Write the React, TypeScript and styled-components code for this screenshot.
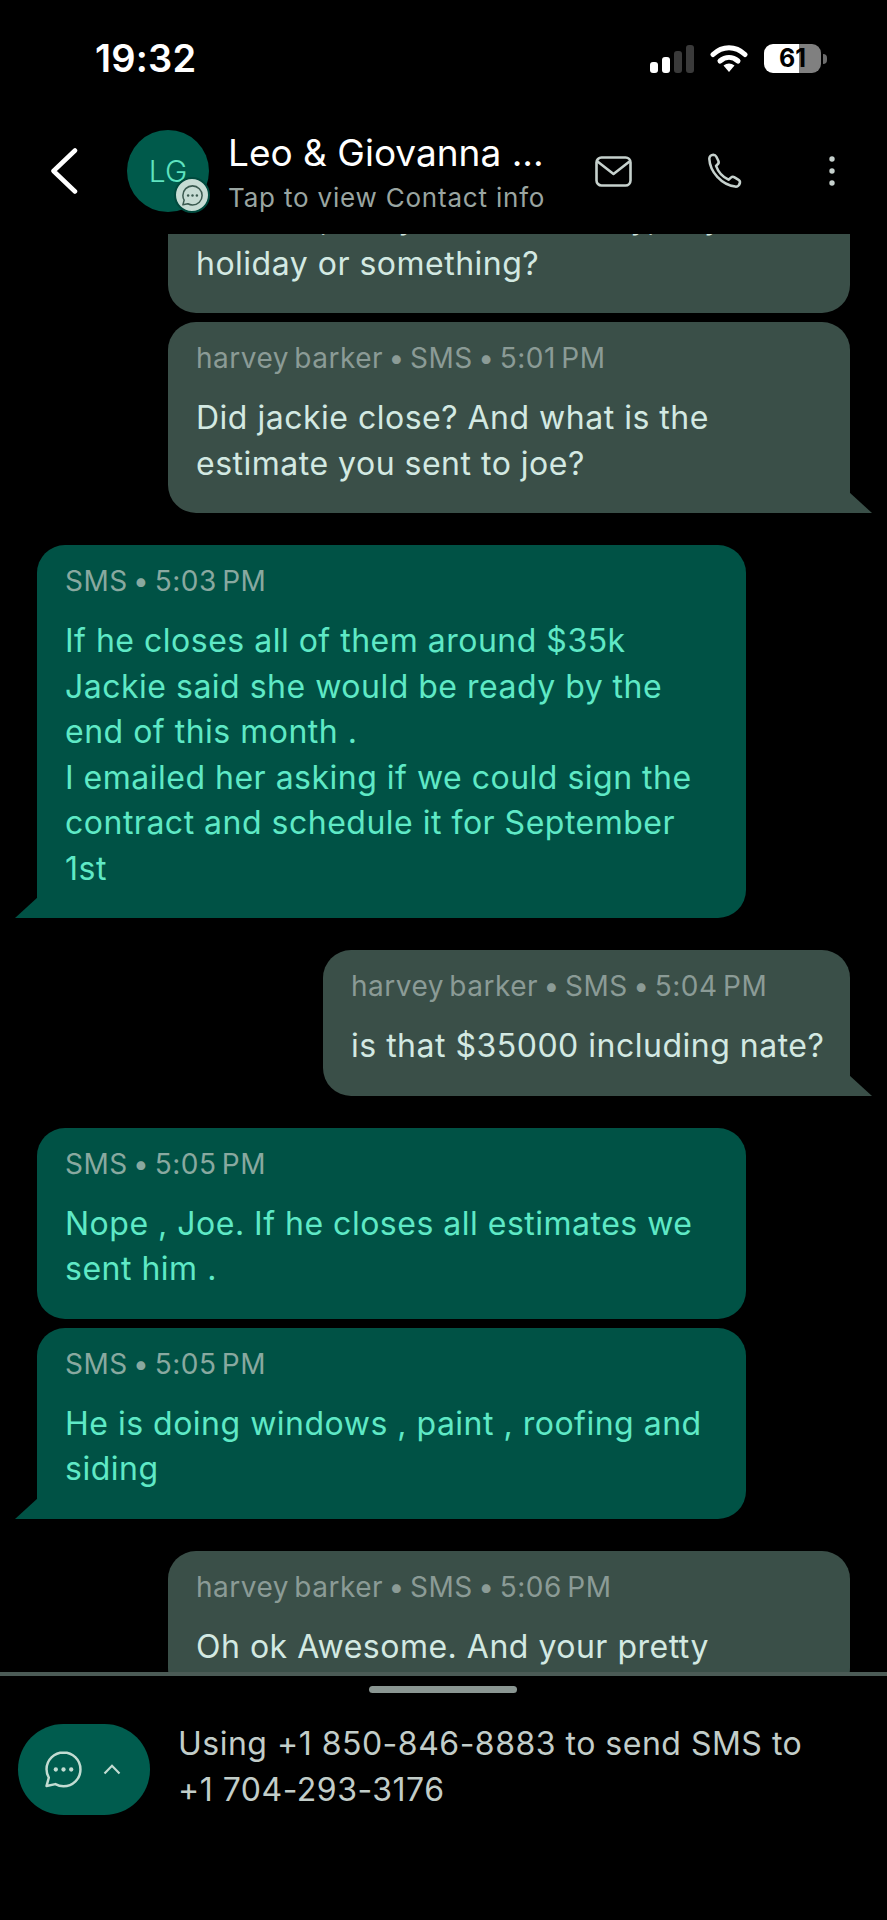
import React from "react";
import styled, { createGlobalStyle } from "styled-components";

const Global = createGlobalStyle`
  html, body { margin: 0; padding: 0; background: #000; }
  * { box-sizing: border-box; }
`;

const Page = styled.div`
  width: 887px;
  height: 1920px;
  background: #000;
  display: flex;
  flex-direction: column;
  overflow: hidden;
  font-family: Inter, "Liberation Sans", sans-serif;
`;

const StatusBar = styled.div`
  height: 118px;
  padding: 36px 66px 0 95px;
  display: flex;
  justify-content: space-between;
  align-items: flex-start;
`;

const Clock = styled.div`
  font-size: 38px;
  line-height: 44px;
  font-weight: 600;
  color: #fff;
  letter-spacing: 0.2px;
`;

const StatusIcons = styled.div`
  display: flex;
  align-items: center;
  gap: 16px;
  height: 44px;
`;

const Signal = styled.div`
  display: flex;
  align-items: flex-end;
  gap: 4px;
  height: 28px;
  margin-top: 1px;
`;

const SignalBar = styled.span<{ $h: number; $on: boolean }>`
  width: 8px;
  height: ${(p) => p.$h}px;
  border-radius: 3px;
  background: ${(p) => (p.$on ? "#fff" : "#3a3a3a")};
`;

const Battery = styled.div`
  width: 57px;
  height: 29px;
  border-radius: 9px;
  background: linear-gradient(90deg, #fff 0 61%, #808080 61% 100%);
  color: #000;
  font-size: 25px;
  font-weight: 700;
  line-height: 29px;
  text-align: center;
  position: relative;
  &::after {
    content: "";
    position: absolute;
    right: -6px;
    top: 10px;
    width: 4px;
    height: 10px;
    border-radius: 0 4px 4px 0;
    background: #6c6c6c;
  }
`;

const Header = styled.div`
  height: 116px;
  padding: 12px 0 0 50px;
  display: flex;
  align-items: flex-start;
`;

const BackButton = styled.div`
  width: 77px;
  height: 82px;
  display: flex;
  align-items: center;
`;

const Avatar = styled.div`
  width: 82px;
  height: 82px;
  border-radius: 50%;
  background: #005a4b;
  color: #5fe3c0;
  font-size: 30px;
  font-weight: 300;
  display: flex;
  align-items: center;
  justify-content: center;
  position: relative;
  flex: none;
`;

const AvatarBadge = styled.div`
  position: absolute;
  right: -1px;
  bottom: -1px;
  width: 36px;
  height: 36px;
  border-radius: 50%;
  background: #c7dcd4;
  border: 2px solid #004a3e;
  display: flex;
  align-items: center;
  justify-content: center;
`;

const TitleBlock = styled.div`
  width: 386px;
  padding: 0 0 0 19px;
  flex: none;
`;

const Title = styled.div`
  color: #fff;
  font-size: 37px;
  line-height: 46px;
  white-space: nowrap;
`;

const Subtitle = styled.div`
  color: #9aa5a1;
  font-size: 26px;
  line-height: 40px;
  margin-top: 2px;
  letter-spacing: 0.8px;
  white-space: nowrap;
`;

const HeaderActions = styled.div`
  display: flex;
  align-items: center;
  height: 82px;
`;

const HeaderAction = styled.div<{ $w: number }>`
  width: ${(p) => p.$w}px;
  display: flex;
  align-items: center;
`;

const Messages = styled.div`
  flex: 1;
  min-height: 0;
  overflow: hidden;
  display: flex;
  flex-direction: column;
  padding: 0 37px;
`;

/* The list is scrolled: its first bubble starts above the visible area. */
const Thread = styled.div`
  margin-top: -57px;
  display: flex;
  flex-direction: column;
`;

const Bubble = styled.div<{ $mine: boolean; $width: number; $tail?: boolean; $gap: number }>`
  position: relative;
  flex: none;
  width: ${(p) => p.$width}px;
  margin-top: ${(p) => p.$gap}px;
  align-self: ${(p) => (p.$mine ? "flex-end" : "flex-start")};
  padding: 18px 28px 27px;
  background: ${(p) => (p.$mine ? "#3a4f48" : "#005245")};
  border-radius: 28px;
  ${(p) =>
    p.$tail
      ? p.$mine
        ? `border-bottom-right-radius: 0;`
        : `border-bottom-left-radius: 0;`
      : ""}
`;

const Tail = styled.svg<{ $mine: boolean }>`
  position: absolute;
  bottom: 0;
  width: 23px;
  height: 21px;
  ${(p) => (p.$mine ? "right: -22px;" : "left: -22px;")}
  fill: ${(p) => (p.$mine ? "#3a4f48" : "#005245")};
`;

const Meta = styled.div<{ $mine: boolean }>`
  font-size: 28px;
  line-height: 36px;
  margin-bottom: 19px;
  white-space: nowrap;
  color: ${(p) => (p.$mine ? "#8b9b96" : "#89a9a0")};
  letter-spacing: 0.5px;
  word-spacing: -3px;
`;

const Body = styled.div<{ $mine: boolean }>`
  font-size: 32px;
  line-height: 45.5px;
  white-space: pre;
  color: ${(p) => (p.$mine ? "#d3e9e2" : "#5fe9c6")};
  letter-spacing: 0.5px;
`;

const Footer = styled.div`
  height: 248px;
  flex: none;
  border-top: 4px solid #4b5b56;
  position: relative;
  padding: 48px 18px 0;
  display: flex;
  align-items: flex-start;
  gap: 28px;
`;

const Handle = styled.div`
  position: absolute;
  top: 10px;
  left: 369px;
  width: 148px;
  height: 7px;
  border-radius: 4px;
  background: #8a9692;
`;

const ComposeButton = styled.div`
  width: 132px;
  height: 91px;
  border-radius: 46px;
  background: #005c4e;
  flex: none;
  display: flex;
  align-items: center;
  padding-left: 27px;
  gap: 21px;
`;

const Notice = styled.div`
  color: #c2cdc9;
  font-size: 32px;
  line-height: 45.5px;
  margin-top: -3px;
  letter-spacing: 0.5px;
  white-space: pre-line;
`;

type Msg = {
  mine: boolean;
  width: number;
  meta?: string;
  body: string;
  tail?: boolean;
  gap: number;
};

const messages: Msg[] = [
  { mine: true, width: 682, gap: 0, body: "Hello all, are you all off today, any\nholiday or something?" },
  { mine: true, width: 682, gap: 9, tail: true, meta: "harvey barker • SMS • 5:01 PM", body: "Did jackie close? And what is the\nestimate you sent to joe?" },
  { mine: false, width: 709, gap: 32, tail: true, meta: "SMS • 5:03 PM", body: "If he closes all of them around $35k\nJackie said she would be ready by the\nend of this month .\nI emailed her asking if we could sign the\ncontract and schedule it for September\n1st" },
  { mine: true, width: 527, gap: 32, tail: true, meta: "harvey barker • SMS • 5:04 PM", body: "is that $35000 including nate?" },
  { mine: false, width: 709, gap: 32, meta: "SMS • 5:05 PM", body: "Nope , Joe. If he closes all estimates we\nsent him ." },
  { mine: false, width: 709, gap: 9, tail: true, meta: "SMS • 5:05 PM", body: "He is doing windows , paint , roofing and\nsiding" },
  { mine: true, width: 682, gap: 32, meta: "harvey barker • SMS • 5:06 PM", body: "Oh ok Awesome. And your pretty" },
];

const ChatIcon = ({ size, color, sw }: { size: number; color: string; sw: number }) => (
  <svg width={size} height={size} viewBox="0 0 36 36" fill="none">
    <path
      d="M18 1.500C8.900 1.500 1.500 8.700 1.500 17.800c0 3 .8 5.800 2.200 8.200L1.500 34l8.600-1.800c2.400 1.300 5 2 7.900 2 9.100 0 16.500-7.200 16.500-16.300S27.100 1.500 18 1.500Z"
      stroke={color}
      strokeWidth={sw}
      strokeLinejoin="round"
    />
    <circle cx="10.500" cy="18" r="2.100" fill={color} />
    <circle cx="18" cy="18" r="2.100" fill={color} />
    <circle cx="25.500" cy="18" r="2.100" fill={color} />
  </svg>
);

export default function App() {
  return (
    <Page>
      <Global />
      <StatusBar>
        <Clock>19:32</Clock>
        <StatusIcons>
          <Signal>
            <SignalBar $h={11} $on />
            <SignalBar $h={16} $on />
            <SignalBar $h={22} $on={false} />
            <SignalBar $h={28} $on={false} />
          </Signal>
          <svg width="38" height="28" viewBox="0 0 38 28" fill="none">
            <path d="M3 10.500C12.500 1.500 25.500 1.500 35 10.500" stroke="#fff" strokeWidth="5" strokeLinecap="round" />
            <path d="M10 17c5.500-4.800 12.500-4.800 18 0" stroke="#fff" strokeWidth="5" strokeLinecap="round" />
            <path d="M13.500 21.500c3.500-2.700 7.500-2.700 11 0L19 28Z" fill="#fff" />
          </svg>
          <Battery>61</Battery>
        </StatusIcons>
      </StatusBar>
      <Header>
        <BackButton>
          <svg width="28" height="46" viewBox="0 0 28 46" fill="none">
            <path d="M25 2.500 3.500 23 25 43.500" stroke="#fff" strokeWidth="4.500" strokeLinecap="round" strokeLinejoin="round" />
          </svg>
        </BackButton>
        <Avatar>
          LG
          <AvatarBadge>
            <ChatIcon size={21} color="#3b5a50" sw={2.6} />
          </AvatarBadge>
        </Avatar>
        <TitleBlock>
          <Title>Leo &amp; Giovanna ...</Title>
          <Subtitle>Tap to view Contact info</Subtitle>
        </TitleBlock>
        <HeaderActions>
          <HeaderAction $w={111}>
            <svg width="37" height="31" viewBox="0 0 37 31" fill="none" stroke="#c6d1cd" strokeWidth="2.600">
              <rect x="1.500" y="1.500" width="34" height="28" rx="5" />
              <path d="M2.500 5.500 18.500 18 34.500 5.500" strokeLinejoin="round" />
            </svg>
          </HeaderAction>
          <HeaderAction $w={122}>
            <svg width="36" height="36" viewBox="0 0 24 24" fill="none" stroke="#c6d1cd" strokeWidth="1.700" strokeLinejoin="round">
              <path d="M2.200 3.800c0-1.300 1.200-2.600 2.700-2.700 1 0 1.600.6 2 1.400l1.300 2.700c.4.800.3 1.700-.4 2.300L6.700 8.600c1.300 3.700 4.700 7.500 8.300 9.200l1.600-1.400c.7-.6 1.600-.7 2.400-.2l2.500 1.500c.9.500 1.300 1.300 1.100 2.200-.3 1.500-1.700 2.700-3.100 2.500C10.300 21 2.600 12.600 2.200 3.800Z" />
            </svg>
          </HeaderAction>
          <svg width="8" height="32" viewBox="0 0 8 32" fill="#c6d1cd">
            <circle cx="4" cy="4" r="2.700" />
            <circle cx="4" cy="16" r="2.700" />
            <circle cx="4" cy="28" r="2.700" />
          </svg>
        </HeaderActions>
      </Header>
      <Messages>
        <Thread>
          {messages.map((m, i) => (
            <Bubble key={i} $mine={m.mine} $width={m.width} $tail={m.tail} $gap={m.gap}>
              {m.meta && <Meta $mine={m.mine}>{m.meta}</Meta>}
              <Body $mine={m.mine}>{m.body}</Body>
              {m.tail && (
                <Tail $mine={m.mine} viewBox="0 0 23 21">
                  <path d={m.mine ? "M0 0 23 21H0Z" : "M23 0 0 21H23Z"} />
                </Tail>
              )}
            </Bubble>
          ))}
        </Thread>
      </Messages>
      <Footer>
        <Handle />
        <ComposeButton>
          <ChatIcon size={37} color="#c2dcd2" sw={2.4} />
          <svg width="18" height="11" viewBox="0 0 18 11" fill="none">
            <path d="M1.500 9.500 9 1.800 16.500 9.500" stroke="#c2dcd2" strokeWidth="2.200" />
          </svg>
        </ComposeButton>
        <Notice>{"Using +1 850-846-8883 to send SMS to\n+1 704-293-3176"}</Notice>
      </Footer>
    </Page>
  );
}
